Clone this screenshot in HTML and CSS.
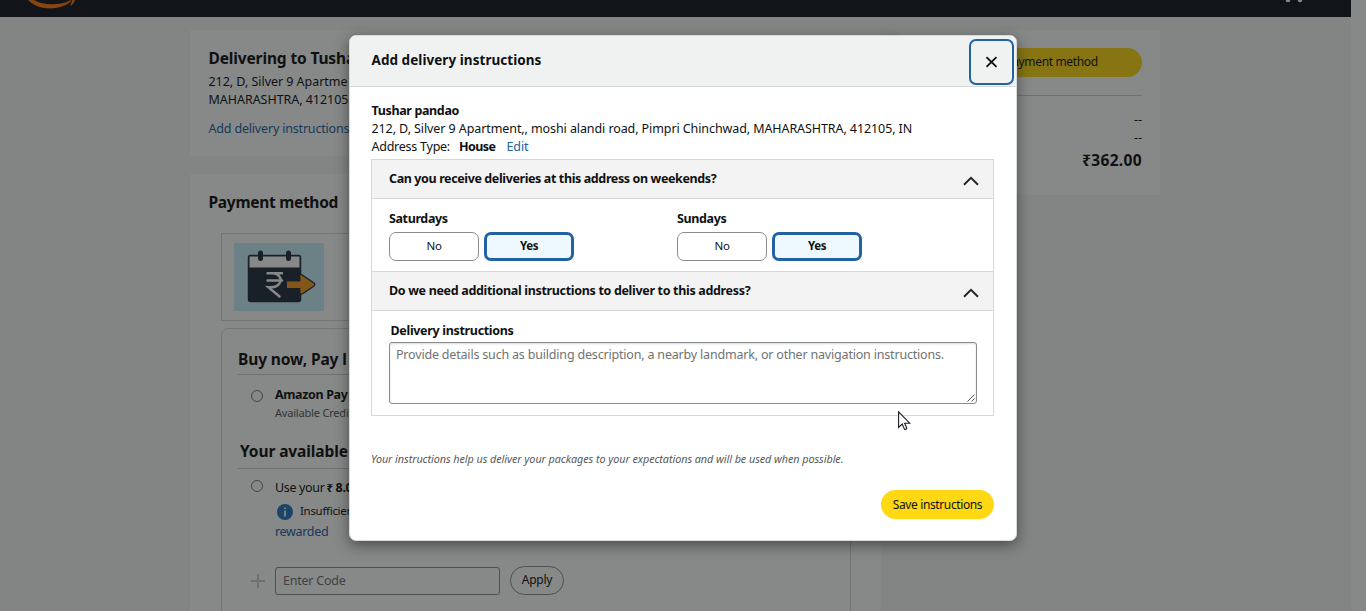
FILE: index.html
```html
<!DOCTYPE html>
<html lang="en">
<head>
<meta charset="utf-8">
<title>Checkout</title>
<link rel="stylesheet" href="styles.css">
</head>
<body>
<div class="page">
  <header class="topbar">
    <svg class="smile" width="52" height="10" viewBox="0 0 52 10"><path d="M1 0H7C16 5.500 32 5.500 42 1L43.500 0Q44.500 .8 43.500 1.800C32 11 12 11 1 0Z" fill="#ff7b10"/><path d="M45 0H48Q47 4 44 5.700L43.300 5.200Q45 2.500 45 0Z" fill="#ff7b10"/></svg>
    <svg class="cart" width="20" height="3" viewBox="0 0 20 3"><circle cx="4" cy="0" r="2.300" fill="#fff"/><circle cx="16" cy="0" r="2.300" fill="#fff"/></svg>
  </header>
  <main class="content">
    <div class="main-col">
      <section class="card address">
        <h2 class="heading">Delivering to Tusha</h2>
        <p class="line">212, D, Silver 9 Apartme</p>
        <p class="line">MAHARASHTRA, 412105</p>
        <a class="link address-link">Add delivery instructions</a>
      </section>
      <section class="card payment">
        <h2 class="heading pay-heading">Payment method</h2>
        <div class="promo">
          <svg width="90" height="68" viewBox="0 0 90 68"><rect width="90" height="68" fill="#c9f0fa"/><rect x="14.500" y="12.500" width="52" height="46" rx="2" fill="#232f3e" stroke="#232f3e" stroke-width="1.500"/><rect x="15.500" y="13.500" width="50" height="11" fill="#fff"/><path d="M26.500 10V15.500M54.500 10V15.500" stroke="#232f3e" stroke-width="5" stroke-linecap="round"/><path d="M33.500 30.300H48M33.500 37.500H48M38 30.300C50 30 50 45.500 34.500 44.300L45.500 53.500" fill="none" stroke="#fff" stroke-width="2.500" stroke-linecap="round"/><path d="M53 38.500H65.800V32Q67 30.500 69 32.500L80 40Q81.500 41.500 80 43L69 50.500Q66.500 52 65.800 50V45H53Z" fill="#f79b22"/><path d="M65.800 38V32Q67 30.500 69 32.500L80 40Q81.500 41.500 80 43L69 50.500Q66.500 52 65.800 50V45" fill="none" stroke="#232f3e" stroke-width="1.300"/></svg>
        </div>
        <div class="methods">
          <h3 class="heading sub">Buy now, Pay l</h3>
          <div class="option">
            <i class="radio"></i>
            <div><p class="option-name">Amazon Pay</p><p class="credit">Available Credit</p></div>
          </div>
          <h3 class="heading sub balance">Your available</h3>
          <div class="option wallet">
            <i class="radio"></i>
            <div>
              <p class="use">Use your <b><small>₹</small> 8.00</b></p>
              <p class="info"><svg width="16" height="16" viewBox="0 0 16 16"><circle cx="8" cy="8" r="8" fill="#2577be"/><path d="M8 6.600V12.500M8 3.500V5" stroke="#fff" stroke-width="1.700"/></svg><span>Insufficient</span></p>
              <a class="link rewarded">rewarded</a>
            </div>
          </div>
          <div class="code">
            <svg width="14" height="14" viewBox="0 0 14 14"><path d="M0 7H14M7 0V14" stroke="#ccc" stroke-width="2"/></svg>
            <span class="code-input">Enter Code</span>
            <span class="apply">Apply</span>
          </div>
        </div>
      </section>
    </div>
    <aside class="card summary">
      <div class="use-btn">Use this payment method</div>
      <div class="dashes"><span>--</span><span>--</span></div>
      <p class="total">₹362.00</p>
    </aside>
  </main>
</div>
<div class="overlay">
  <section class="modal">
    <header class="modal-head">
      <h1 class="modal-title">Add delivery instructions</h1>
      <button class="close"><svg width="12" height="12" viewBox="0 0 12 12"><path d="M.5 1.200L10.500 10.800M10.500 1.200L.5 10.800" stroke="#0f1111" stroke-width="1.800"/></svg></button>
    </header>
    <div class="modal-body">
      <p class="line name">Tushar pandao</p>
      <p class="line full">212, D, Silver 9 Apartment,, moshi alandi road, Pimpri Chinchwad, MAHARASHTRA, 412105, IN</p>
      <p class="line type"><span>Address Type:</span><b>House</b><a class="link edit">Edit</a></p>
      <div class="panel">
        <div class="row-head"><span class="q1">Can you receive deliveries at this address on weekends?</span><svg width="16" height="10" viewBox="0 0 16 10"><path d="M1 8.700L8 1.800L15 8.700" fill="none" stroke="#222" stroke-width="1.900"/></svg></div>
        <div class="days">
          <div><p class="day">Saturdays</p><div class="choices"><span class="choice">No</span><span class="choice on">Yes</span></div></div>
          <div><p class="day">Sundays</p><div class="choices"><span class="choice">No</span><span class="choice on">Yes</span></div></div>
        </div>
        <div class="row-head second"><span class="q2">Do we need additional instructions to deliver to this address?</span><svg width="16" height="10" viewBox="0 0 16 10"><path d="M1 8.700L8 1.800L15 8.700" fill="none" stroke="#222" stroke-width="1.900"/></svg></div>
        <div class="notes">
          <p class="notes-label">Delivery instructions</p>
          <div class="notes-box"><span>Provide details such as building description, a nearby landmark, or other navigation instructions.</span><svg class="grip" width="8" height="8" viewBox="0 0 8 8"><path d="M.5 7.500L7.500 .5M4.500 7.500L7.500 4.500" stroke="#555"/></svg></div>
        </div>
      </div>
      <p class="hint">Your instructions help us deliver your packages to your expectations and will be used when possible.</p>
      <button class="save">Save instructions</button>
    </div>
  </section>
  <svg class="cursor" width="13" height="20" viewBox="0 0 13 20"><path d="M.6 .8V16.400L4.200 13L6.400 18.200Q7.700 18.800 8.800 17.300L6.600 12.200H11.700Z" fill="#fff" stroke="#1a1a2a" stroke-width="1.100"/></svg>
</div>
</body>
</html>
```
FILE: styles.css
```css
* { box-sizing: border-box; margin: 0; padding: 0; }
html, body { height: 611px; overflow: hidden; }
body { font: 12.5px/18px "Noto Sans", sans-serif; color: #0f1111; background: #fff; white-space: nowrap; }
button { font: inherit; color: inherit; border: 0; }
svg { display: block; flex: none; }
.page { width: 1351px; height: 611px; overflow: hidden; background: #f7f8f7; }
.topbar { height: 17px; background: #131921; display: flex; justify-content: space-between; padding: 0 47px 0 27px; }
.content { display: flex; align-items: flex-start; gap: 17px; margin: 13px 191px 0 190px; }
.main-col { width: 691px; }
.card { background: #fff; }
.heading { font-size: 15.5px; line-height: 22px; font-weight: 700; letter-spacing: -0.14px; }
.line { height: 18px; }
.link { display: block; color: #2162a1; }
.address { height: 126px; padding: 17px 18px 0 18.500px; }
.address .heading { margin-bottom: 4px; }
.address .line { letter-spacing: -0.04px; }
.address-link { margin-top: 11px; letter-spacing: -0.18px; }
.payment { margin-top: 18px; height: 500px; padding: 17px 30px 0 31px; }
.pay-heading { margin-left: -12.500px; letter-spacing: -0.29px; }
.promo { margin-top: 20px; height: 88px; border: 1px solid #d5d9d9; padding: 9px 12px; }
.methods { margin-top: 7px; height: 400px; border: 1px solid #d5d9d9; border-radius: 7px; padding: 19px 16px; }
.sub { height: 27px; border-bottom: 1px solid #ccc; letter-spacing: -0.1px; }
.option { display: flex; gap: 12px; padding: 11px 0 0 13px; height: 65px; }
.radio { width: 12px; height: 12px; border: 1px solid #777; border-radius: 50%; margin-top: 4px; flex: none; }
.option-name { font-weight: 700; letter-spacing: -0.36px; }
.credit { font-size: 11px; color: #565959; letter-spacing: -0.19px; }
.balance { height: 29px; padding-left: 2px; letter-spacing: -0.1px; }
.wallet { height: 97px; padding-top: 10px; }
.wallet .radio { margin-top: 1px; }
.use { letter-spacing: -0.34px; }
.use small { font-size: 11.5px; margin-left: -1px; }
.info { display: flex; align-items: center; gap: 7px; height: 18px; margin: 5px 0 0 2px; font-size: 11.5px; letter-spacing: -0.3px; }
.info svg { margin-top: 1px; }
.rewarded { margin-top: 3px; letter-spacing: -0.33px; }
.code { display: flex; align-items: center; padding-left: 13px; }
.code-input { width: 225px; height: 28px; margin: 0 10px 0 10px; padding-left: 7px; line-height: 25px; border: 1px solid #888c8c; border-radius: 3px; color: #6f7373; letter-spacing: -0.235px; }
.apply { width: 54px; height: 29px; line-height: 26px; text-align: center; border: 1px solid #888c8c; border-radius: 15px; font-size: 12px; letter-spacing: -0.23px; }
.summary { width: 262px; height: 165px; padding: 18px 18px 0; }
.use-btn { height: 29px; line-height: 28px; text-align: center; background: #ffd814; border-radius: 15px; font-size: 12px; letter-spacing: -0.35px; }
.dashes { margin-top: 18px; padding-top: 15px; border-top: 1px solid #ccc; display: flex; flex-direction: column; align-items: flex-end; }
.total { margin-top: 2px; text-align: right; font-size: 15.5px; line-height: 22px; font-weight: 700; letter-spacing: 0.35px; }

.overlay { position: absolute; inset: 0; background: rgba(15, 17, 17, 0.5); padding: 35px 0 0 349px; }
.modal { width: 668px; height: 506px; background: #fff; border: 1px solid #d5d9d9; border-radius: 7px; box-shadow: 0 4px 14px rgba(15, 17, 17, 0.5); overflow: hidden; }
.modal-head { height: 51px; background: #f0f2f2; border-bottom: 1px solid #d5d9d9; display: flex; justify-content: space-between; align-items: flex-start; padding: 3px 2px 0 21.500px; }
.modal-title { font-size: 13.5px; line-height: 42px; font-weight: 700; letter-spacing: 0.05px; }
.close { width: 45px; height: 46px; border: 2px solid #2162a1; border-radius: 7px; background: #f0f2f2; display: flex; align-items: center; justify-content: center; }
.modal-body { padding: 15px 22px 0 21px; display: flex; flex-direction: column; }
.modal-body .line { padding-left: 0.5px; }
.name { font-weight: 700; letter-spacing: -0.36px; }
.full { letter-spacing: -0.09px; }
.type { display: flex; letter-spacing: -0.25px; }
.type b { margin-left: 9px; letter-spacing: -0.55px; }
.edit { margin-left: 11px; letter-spacing: -0.09px; }
.panel { margin-top: 3px; height: 257px; border: 1px solid #d5d9d9; }
.row-head { height: 39px; background: #f3f3f3; border-bottom: 1px solid #d5d9d9; display: flex; justify-content: space-between; align-items: center; padding: 0 14px 0 17px; font-weight: 700; }
.row-head svg { margin-top: 4px; }
.q1 { letter-spacing: -0.385px; }
.q2 { letter-spacing: -0.325px; }
.second { height: 40px; border-top: 1px solid #d5d9d9; }
.days { height: 72px; padding: 11px 0 0 17px; display: grid; grid-template-columns: 288px 288px; }
.day { font-weight: 700; letter-spacing: -0.38px; }
.choices { display: flex; gap: 5px; margin-top: 4px; }
.choice { width: 90px; height: 29px; line-height: 26px; border: 1px solid #888c8c; border-radius: 7px; text-align: center; font-size: 11.5px; letter-spacing: -0.35px; }
.on { border: 3px solid #2162a1; line-height: 22px; background: #edf8ff; font-weight: 700; }
.notes { padding: 11px 16px 0 17px; }
.notes-label { font-weight: 700; padding-left: 1.5px; letter-spacing: -0.32px; }
.notes-box { position: relative; width: 588px; height: 62px; margin-top: 2px; padding: 3px 6px; border: 1px solid #888c8c; border-radius: 3px; color: #6f7373; letter-spacing: -0.188px; box-shadow: inset 0 1px 2px rgba(15, 17, 17, 0.15); }
.grip { position: absolute; right: 1px; bottom: 1px; }
.hint { margin-top: 34px; font-size: 10.8px; font-style: italic; color: #565959; letter-spacing: -0.055px; }
.save { align-self: flex-end; width: 113px; height: 29px; margin-top: 22px; background: #ffd814; border-radius: 15px; font-size: 12px; letter-spacing: -0.375px; }
.cursor { position: absolute; left: 898px; top: 411px; }
```
